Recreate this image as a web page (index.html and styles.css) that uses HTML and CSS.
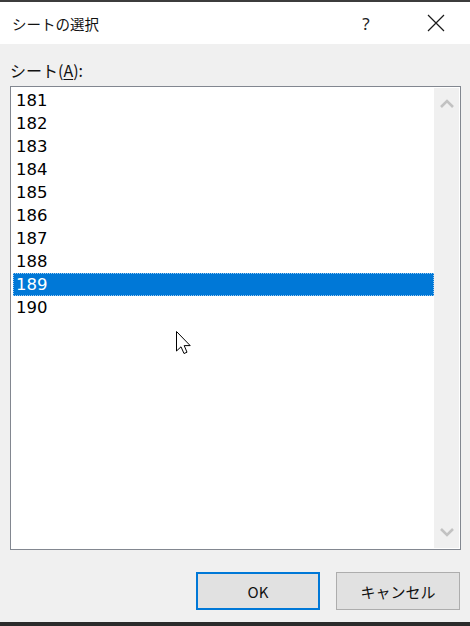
FILE: index.html
```html
<!DOCTYPE html>
<html lang="ja">
<head>
<meta charset="utf-8">
<link rel="stylesheet" href="styles.css">
</head>
<body>
<div class="window">
  <div class="topline"></div>
  <div class="titlebar">
    <span class="title">シートの選択</span>
    <span class="help">?</span>
    <span class="close">
      <svg width="18" height="18" viewBox="0 0 18 18"><path d="M1 1 L17 17 M17 1 L1 17" stroke="#1a1a1a" stroke-width="1.2" fill="none"/></svg>
    </span>
  </div>
  <div class="content">
    <div class="label">シート(<u>A</u>):</div>
    <div class="listbox">
      <div class="items">
        <div class="item">181</div>
        <div class="item">182</div>
        <div class="item">183</div>
        <div class="item">184</div>
        <div class="item">185</div>
        <div class="item">186</div>
        <div class="item">187</div>
        <div class="item">188</div>
        <div class="item selected">189</div>
        <div class="item">190</div>
      </div>
      <div class="scrollbar">
        <svg class="arrow" width="16" height="10" viewBox="0 0 16 10"><path d="M2 9 L8 3 L14 9" stroke="#c2c2c2" stroke-width="2.6" fill="none"/></svg>
        <svg class="arrow" width="16" height="10" viewBox="0 0 16 10"><path d="M2 1 L8 7 L14 1" stroke="#c2c2c2" stroke-width="2.6" fill="none"/></svg>
      </div>
    </div>
    <div class="buttons">
      <button class="btn default">OK</button>
      <button class="btn">キャンセル</button>
    </div>
  </div>
  <div class="bottombar"></div>
  <svg class="cursor" width="20" height="28" viewBox="0 0 20 28"><path d="M1.5 1.5 L1.5 21 L6 16.8 L9 23.5 L12 22.2 L9.2 15.6 L15.2 15.6 Z" fill="#fff" stroke="#000" stroke-width="1" stroke-linejoin="miter"/></svg>
</div>
</body>
</html>
```
FILE: styles.css
```css
html, body {
  margin: 0;
  padding: 0;
  background: #f0f0f0;
}
.window {
  position: relative;
  width: 470px;
  height: 626px;
  display: flex;
  flex-direction: column;
  font-family: "Noto Sans CJK JP", "Noto Sans", sans-serif;
  color: #000;
  overflow: hidden;
}
.topline {
  height: 2px;
  background: #3c3c3c;
}
.titlebar {
  height: 42px;
  background: #fff;
  display: flex;
  align-items: center;
  padding-left: 12px;
}
.title {
  font-size: 14.5px;
  flex: 1;
  color: #111;
}
.help {
  font-family: "Noto Sans", sans-serif;
  font-size: 17px;
  width: 20px;
  text-align: center;
  margin-right: 51px;
  color: #222;
}
.close {
  display: flex;
  width: 18px;
  height: 18px;
  margin-right: 25px;
}
.content {
  flex: 1;
  display: flex;
  flex-direction: column;
  padding: 16px 9px 0 10px;
}
.label {
  font-size: 16px;
  line-height: 20px;
  height: 20px;
  margin-bottom: 6px;
  color: #111;
}
.label u {
  text-decoration-thickness: 1px;
  text-underline-offset: 2px;
}
.listbox {
  height: 460px;
  border: 1px solid #828790;
  background: #fff;
  padding: 1px;
  display: flex;
}
.items {
  flex: 1;
  padding: 1px 0 0 1px;
  font-family: "DejaVu Sans", sans-serif;
  font-size: 16.5px;
}
.item {
  height: 23px;
  line-height: 23px;
  padding-left: 3px;
}
.item.selected {
  background: #0078d7;
  color: #fff;
  outline: 1px dotted #9ccaf0;
  outline-offset: -1px;
}
.scrollbar {
  width: 25px;
  background: #f0f0f0;
  display: flex;
  flex-direction: column;
  justify-content: space-between;
  align-items: center;
  padding: 10px 0 10px;
}
.arrow {
  display: block;
}
.buttons {
  display: flex;
  justify-content: flex-end;
  gap: 16px;
  margin-top: 22px;
  padding-right: 1px;
}
.btn {
  width: 124px;
  height: 38px;
  background: #e1e1e1;
  border: 1px solid #adadad;
  font-family: "Noto Sans CJK JP", "Noto Sans", sans-serif;
  font-size: 15px;
  color: #111;
  padding: 0;
  margin: 0;
}
.btn.default {
  border: 2px solid #0078d7;
}
.bottombar {
  height: 4px;
  background: #2b2b2b;
}
.cursor {
  position: absolute;
  left: 175px;
  top: 330px;
}
```
